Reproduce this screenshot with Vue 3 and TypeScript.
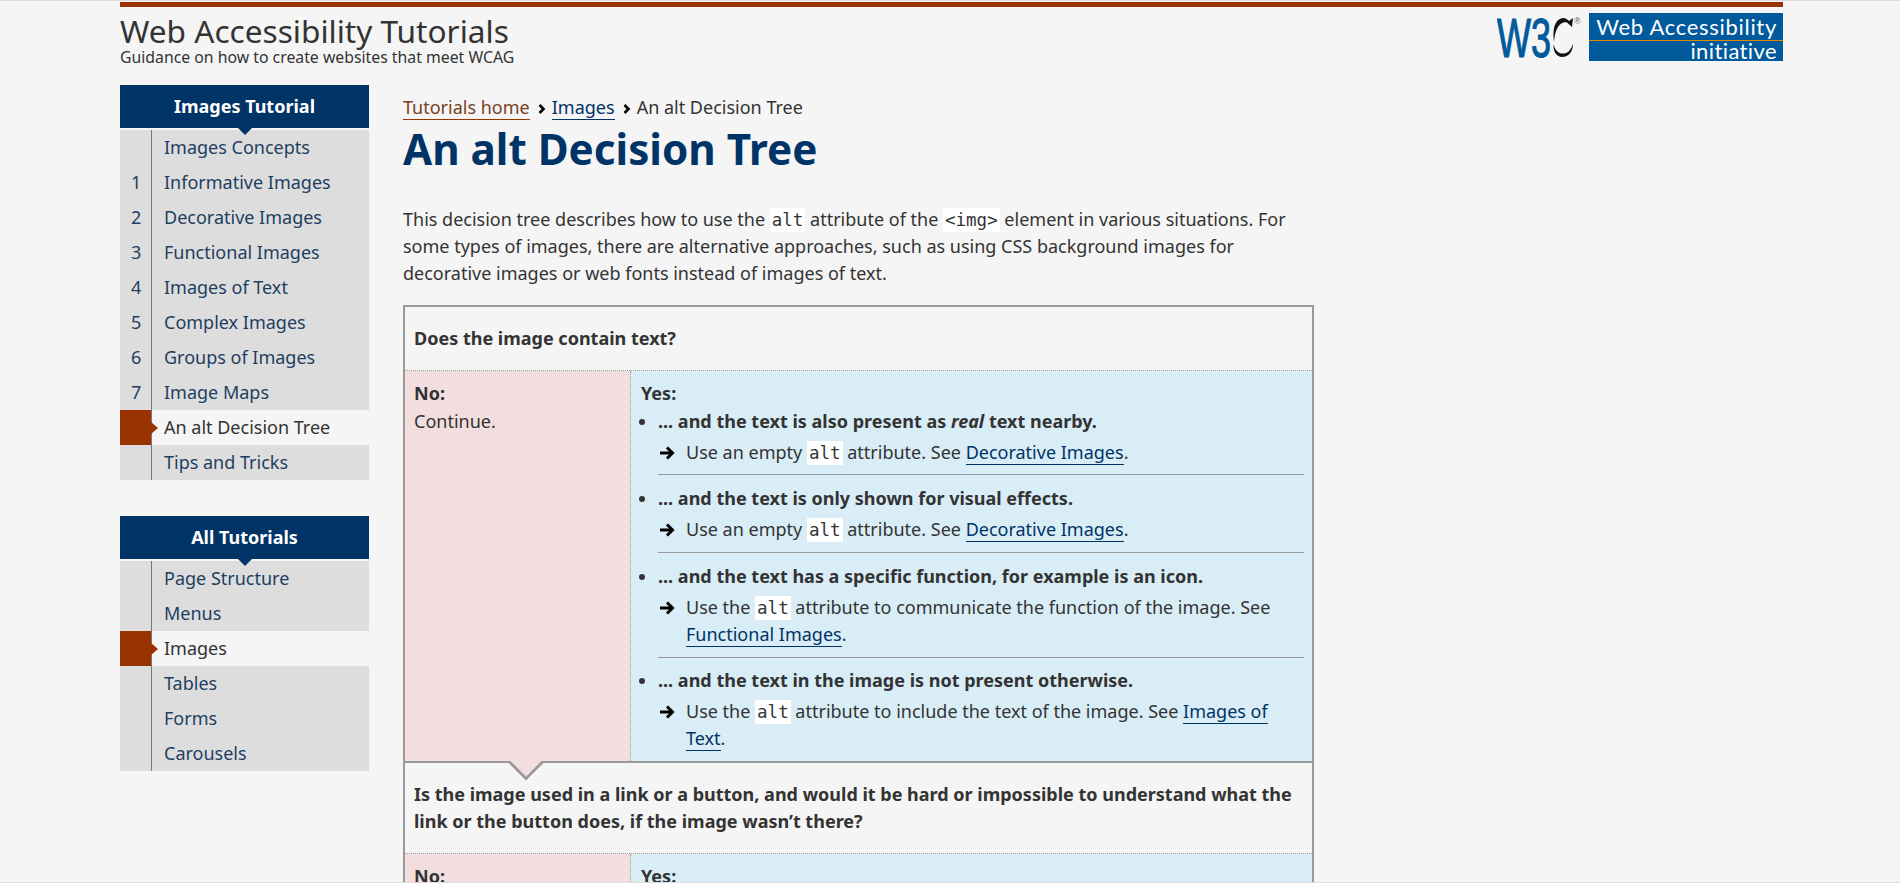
<template>
  <div class="page">
    <div class="wrap">
      <header class="site-header">
        <div class="site-title">
          <div class="title">Web Accessibility Tutorials</div>
          <div class="subtitle">Guidance on how to create websites that meet WCAG</div>
        </div>
        <div class="logos">
          <svg class="w3c" width="84" height="48" viewBox="0 0 84 48" aria-label="W3C">
            <text x="0" y="44" class="w3c-text" textLength="54" lengthAdjust="spacingAndGlyphs">W3</text>
            <path d="M76 5 L75 14 L70 9.5 C64 8 58 14 57 29 C55 16 58 6 66 5 C69 5 71 7 72 8 Z" fill="#111" />
            <path d="M56.5 31 C58 39 64 42 69 40 C72 39 74 36 76 31 C76 38 72 44 65 44 C60 44 56 39 56.5 31 Z" fill="#111" />
            <text x="77" y="11" class="w3c-reg">®</text>
          </svg>
          <div class="wai">
            <div class="wai-top">Web Accessibility</div>
            <div class="wai-bottom">initiative</div>
          </div>
        </div>
      </header>

      <div class="columns">
        <aside class="sidebar">
          <nav v-for="group in navGroups" :key="group.title" class="nav-group">
            <h2 class="nav-title">{{ group.title }}</h2>
            <ul class="nav-list">
              <li
                v-for="item in group.items"
                :key="item.label"
                class="nav-item"
                :class="{ 'nav-item--current': item.label === group.current }"
              >
                <span class="nav-num">{{ item.num }}</span>
                <span class="nav-label">{{ item.label }}</span>
              </li>
            </ul>
          </nav>
        </aside>

        <main class="content">
          <div class="crumbs">
            <a class="crumb-home">Tutorials home</a>
            <svg class="crumb-sep" width="8" height="10" viewBox="0 0 8 10"><path d="M1.5 1 L5.5 5 L1.5 9" fill="none" stroke="#000" stroke-width="2.6" /></svg>
            <a class="link">Images</a>
            <svg class="crumb-sep" width="8" height="10" viewBox="0 0 8 10"><path d="M1.5 1 L5.5 5 L1.5 9" fill="none" stroke="#000" stroke-width="2.6" /></svg>
            <span>An alt Decision Tree</span>
          </div>
          <h1 class="heading">An alt Decision Tree</h1>
          <p class="intro">
            This decision tree describes how to use the <code>alt</code> attribute of the <code>&lt;img&gt;</code> element in various situations. For
            some types of images, there are alternative approaches, such as using CSS background images for
            decorative images or web fonts instead of images of text.
          </p>

          <div class="tree">
            <section class="question">Does the image contain text?</section>
            <div class="answers">
              <div class="no">
                <strong>No:</strong>
                <div class="continue">Continue.</div>
              </div>
              <div class="yes">
                <strong>Yes:</strong>
                <ul class="cases">
                  <li>
                    <strong>... and the text is also present as <em>real</em> text nearby.</strong>
                    <div class="action">
                      <svg class="arrow" width="16" height="16" viewBox="0 0 16 16"><path d="M1 8 H13 M8 2.5 L13.5 8 L8 13.5" fill="none" stroke="#000" stroke-width="3" /></svg>
                      <span>Use an empty <code>alt</code> attribute. See <a class="link">Decorative Images</a>.</span>
                    </div>
                  </li>
                  <li>
                    <strong>... and the text is only shown for visual effects.</strong>
                    <div class="action">
                      <svg class="arrow" width="16" height="16" viewBox="0 0 16 16"><path d="M1 8 H13 M8 2.5 L13.5 8 L8 13.5" fill="none" stroke="#000" stroke-width="3" /></svg>
                      <span>Use an empty <code>alt</code> attribute. See <a class="link">Decorative Images</a>.</span>
                    </div>
                  </li>
                  <li>
                    <strong>... and the text has a specific function, for example is an icon.</strong>
                    <div class="action">
                      <svg class="arrow" width="16" height="16" viewBox="0 0 16 16"><path d="M1 8 H13 M8 2.5 L13.5 8 L8 13.5" fill="none" stroke="#000" stroke-width="3" /></svg>
                      <span>Use the <code>alt</code> attribute to communicate the function of the image. See <a class="link">Functional Images</a>.</span>
                    </div>
                  </li>
                  <li>
                    <strong>... and the text in the image is not present otherwise.</strong>
                    <div class="action">
                      <svg class="arrow" width="16" height="16" viewBox="0 0 16 16"><path d="M1 8 H13 M8 2.5 L13.5 8 L8 13.5" fill="none" stroke="#000" stroke-width="3" /></svg>
                      <span>Use the <code>alt</code> attribute to include the text of the image. See <a class="link">Images of Text</a>.</span>
                    </div>
                  </li>
                </ul>
              </div>
            </div>
            <section class="question question--next">
              Is the image used in a link or a button, and would it be hard or impossible to understand what the link or the button does, if the image wasn’t there?
            </section>
            <div class="answers">
              <div class="no"><strong>No:</strong></div>
              <div class="yes"><strong>Yes:</strong></div>
            </div>
          </div>
        </main>
      </div>
    </div>
  </div>
</template>

<script setup lang="ts">
interface NavItem {
  num: string;
  label: string;
}

const navGroups: { title: string; current: string; items: NavItem[] }[] = [
  {
    title: 'Images Tutorial',
    current: 'An alt Decision Tree',
    items: [
      { num: '', label: 'Images Concepts' },
      { num: '1', label: 'Informative Images' },
      { num: '2', label: 'Decorative Images' },
      { num: '3', label: 'Functional Images' },
      { num: '4', label: 'Images of Text' },
      { num: '5', label: 'Complex Images' },
      { num: '6', label: 'Groups of Images' },
      { num: '7', label: 'Image Maps' },
      { num: '', label: 'An alt Decision Tree' },
      { num: '', label: 'Tips and Tricks' },
    ],
  },
  {
    title: 'All Tutorials',
    current: 'Images',
    items: [
      { num: '', label: 'Page Structure' },
      { num: '', label: 'Menus' },
      { num: '', label: 'Images' },
      { num: '', label: 'Tables' },
      { num: '', label: 'Forms' },
      { num: '', label: 'Carousels' },
    ],
  },
];
</script>

<style>
html,
body {
  margin: 0;
  overflow: hidden;
}
</style>

<style scoped>
.page {
  height: 883px;
  box-sizing: border-box;
  overflow: hidden;
  background: #f5f5f5;
  border-top: 1px solid #dedede;
  border-bottom: 1px solid #dedede;
  color: #333;
  font-family: "Noto Sans", sans-serif;
  font-size: 18px;
  line-height: 27px;
}

.wrap {
  width: 1663px;
  margin-left: 120px;
  border-top: 5px solid #993300;
  margin-top: 1px;
}

.site-header {
  display: flex;
  justify-content: space-between;
  padding-top: 6px;
  height: 72px;
  box-sizing: border-box;
}

.title {
  font-size: 31.6px;
  line-height: 36px;
}

.subtitle {
  font-size: 15.8px;
  line-height: 16px;
}

.logos {
  display: flex;
  gap: 8px;
  align-items: flex-start;
}

.w3c {
  display: block;
}

.w3c-text {
  font-family: "Liberation Sans", sans-serif;
  font-size: 55px;
  fill: #005a9c;
  stroke: #005a9c;
  stroke-width: 1.2px;
}

.w3c-reg {
  font-family: "Liberation Sans", sans-serif;
  font-size: 9px;
  fill: #666;
}

.wai {
  width: 194px;
  height: 48px;
  background: #005a9c;
  color: #fff;
  font-family: "Lato", sans-serif;
  text-align: right;
  box-sizing: border-box;
  padding-right: 6px;
}

.wai-top {
  font-size: 22px;
  line-height: 27px;
  border-bottom: 1px solid #e08a00;
  margin-right: -6px;
  padding-right: 6px;
  letter-spacing: 0.7px;
}

.wai-bottom {
  font-size: 22px;
  line-height: 20px;
  letter-spacing: 0.4px;
}

.columns {
  display: flex;
  gap: 34px;
  margin-top: 6px;
}

.sidebar {
  width: 249px;
  flex: none;
}

.nav-group {
  margin-bottom: 36px;
}

.nav-title {
  position: relative;
  margin: 0;
  height: 43px;
  background: #003366;
  color: #fff;
  font-size: 18px;
  line-height: 43px;
  font-weight: 700;
  text-align: center;
}

.nav-title::after {
  content: "";
  position: absolute;
  left: 50%;
  top: 43px;
  margin-left: -7px;
  border-left: 7px solid transparent;
  border-right: 7px solid transparent;
  border-top: 7px solid #003366;
  z-index: 1;
}

.nav-list {
  list-style: none;
  margin: 2px 0 0;
  padding: 0;
  background: #dddddd;
}

.nav-item {
  display: flex;
  height: 35px;
  line-height: 35px;
  color: #1d3f62;
}

.nav-num {
  position: relative;
  flex: none;
  box-sizing: border-box;
  padding-left: 11px;
  border-right: 1px solid #777;
  width: 32px;
}

.nav-label {
  padding-left: 12px;
}

.nav-item--current {
  background: #f5f5f5;
  color: #333;
}

.nav-item--current .nav-num {
  background: #993300;
}

.nav-item--current .nav-num::after {
  content: "";
  position: absolute;
  left: 31px;
  top: 50%;
  margin-top: -6px;
  border-top: 6px solid transparent;
  border-bottom: 6px solid transparent;
  border-left: 7px solid #993300;
}

.content {
  width: 911px;
  flex: none;
}

.crumbs {
  margin-top: 8px;
  line-height: 28px;
}

.crumb-home {
  color: #7a3f22;
  border-bottom: 1px solid #993300;
}

.link {
  color: #003366;
  border-bottom: 1px solid #003366;
}

.crumb-sep {
  margin: 0 6px 0 8px;
}

.heading {
  margin: 3px 0 0;
  color: #003366;
  font-size: 42.2px;
  line-height: 50px;
  font-weight: 700;
}

.intro {
  margin: 32px 0 18px;
  width: 900px;
}

code {
  font-family: "DejaVu Sans Mono", monospace;
  font-size: 17.5px;
  line-height: 1;
  background: #fff;
  padding: 2px 2px;
}

.tree {
  border: 2px solid #999;
  border-bottom: none;
}

.question {
  padding: 18px 9px;
  font-weight: 700;
  border-bottom: 1px dotted #999;
}

.question--next {
  position: relative;
  border-top: 2px solid #999;
}

.question--next::before {
  content: "";
  position: absolute;
  left: 107px;
  top: -16px;
  width: 28px;
  height: 28px;
  box-sizing: border-box;
  background: #f2dede;
  border-right: 3px solid #999;
  border-bottom: 3px solid #999;
  transform: rotate(45deg);
  clip-path: polygon(100% 0, 100% 100%, 0 100%);
}

.answers {
  display: flex;
}

.no {
  width: 225px;
  flex: none;
  box-sizing: border-box;
  background: #f2dede;
  padding: 9px 9px 0;
}

.continue {
  margin-top: 1px;
}

.yes {
  flex: 1;
  background: #d9edf7;
  border-left: 1px dotted #999;
  padding: 9px 8px 0 10px;
}

.cases {
  margin: 1px 0 0;
  padding: 0 0 0 17px;
}

.cases li {
  padding-bottom: 9px;
  border-bottom: 1px solid #999;
}

.cases li + li {
  margin-top: 10px;
}

.cases li:first-child {
  padding-bottom: 8px;
}

.cases li:last-child {
  margin-top: 9px;
  border-bottom: none;
}

.action {
  display: flex;
  gap: 11px;
  margin-top: 4px;
}

.arrow {
  flex: none;
  margin: 6px 0 0 1px;
}
</style>
